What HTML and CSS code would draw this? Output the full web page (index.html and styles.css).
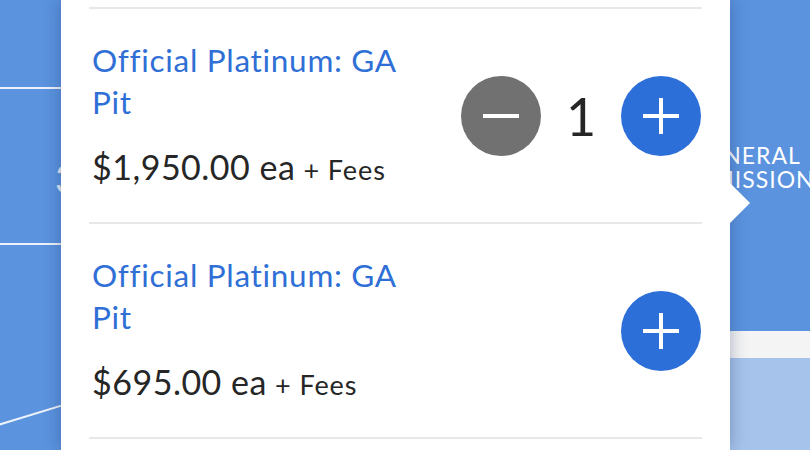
FILE: index.html
```html
<!DOCTYPE html>
<html>
<head>
<meta charset="utf-8">
<link rel="stylesheet" href="styles.css">
</head>
<body>
<div class="map">
  <div class="hline hline-1"></div>
  <div class="hline hline-2"></div>
  <div class="diag"></div>
  <div class="map-num">3</div>
  <div class="section-right">
    <div class="sec-blue"><div class="sec-label"><div>GENERAL</div><div>ADMISSION</div></div></div>
    <div class="sec-gap"></div>
    <div class="sec-light"></div>
  </div>
</div>
<div class="panel">
  <div class="list">
    <div class="ticket">
      <div class="info">
        <div class="title">Official Platinum: GA<br>Pit</div>
        <div class="price"><span class="amount">$1,950.00 ea</span> <span class="fees">+ Fees</span></div>
      </div>
      <div class="qty">
        <button class="btn btn-minus" aria-label="Remove"><svg viewBox="0 0 80 80" width="80" height="80"><rect x="22" y="38" width="36" height="4" fill="#fff"/></svg></button>
        <span class="count">1</span>
        <button class="btn btn-plus" aria-label="Add"><svg viewBox="0 0 80 80" width="80" height="80"><rect x="22" y="38" width="36" height="4" fill="#fff"/><rect x="38" y="22" width="4" height="36" fill="#fff"/></svg></button>
      </div>
    </div>
    <div class="ticket">
      <div class="info">
        <div class="title">Official Platinum: GA<br>Pit</div>
        <div class="price"><span class="amount">$695.00 ea</span> <span class="fees">+ Fees</span></div>
      </div>
      <div class="qty">
        <button class="btn btn-plus" aria-label="Add"><svg viewBox="0 0 80 80" width="80" height="80"><rect x="22" y="38" width="36" height="4" fill="#fff"/><rect x="38" y="22" width="4" height="36" fill="#fff"/></svg></button>
      </div>
    </div>
  </div>
</div>
</body>
</html>
```
FILE: styles.css
```css
html, body {
  margin: 0;
  padding: 0;
  width: 810px;
  height: 450px;
  overflow: hidden;
}
body {
  background: #5b93df;
  font-family: "Lato", "Noto Sans", sans-serif;
  position: relative;
}
.map {
  position: absolute;
  inset: 0;
  overflow: hidden;
}
.hline {
  position: absolute;
  left: 0;
  width: 120px;
  height: 2px;
  background: #eef3fb;
}
.hline-1 { top: 87px; }
.hline-2 { top: 243px; }
.diag {
  position: absolute;
  left: -2px;
  top: 424px;
  width: 80px;
  height: 2px;
  background: #eef3fb;
  transform-origin: 0 50%;
  transform: rotate(-17deg);
}
.map-num {
  position: absolute;
  left: 55px;
  top: 158px;
  font-size: 38px;
  color: #e4ebf6;
  line-height: 40px;
}
.section-right {
  position: absolute;
  left: 600px;
  top: 0;
  width: 210px;
  height: 450px;
  display: flex;
  flex-direction: column;
  overflow: hidden;
}
.sec-blue {
  height: 331px;
  background: #5b93df;
  position: relative;
  overflow: hidden;
}
.sec-label {
  position: absolute;
  left: 46px;
  top: 143px;
  width: 200px;
  text-align: center;
  color: #fff;
  font-size: 23px;
  line-height: 24px;
  letter-spacing: 1px;
}
.sec-gap {
  height: 27px;
  background: #f4f4f4;
}
.sec-light {
  flex: 1;
  background: #a6c4eb;
}
.panel {
  position: absolute;
  left: 61px;
  top: 0;
  width: 669px;
  height: 450px;
  background: #fff;
  box-shadow: 0 0 16px rgba(20, 40, 90, 0.35);
  box-sizing: border-box;
  padding: 7px 28px 0 28px;
}
.panel::after {
  content: "";
  position: absolute;
  right: -20px;
  top: 183px;
  border-top: 20px solid transparent;
  border-bottom: 20px solid transparent;
  border-left: 20px solid #fff;
}
.list {
  border-top: 2px solid #e8e8e8;
}
.ticket {
  display: flex;
  align-items: center;
  justify-content: space-between;
  border-bottom: 2px solid #e8e8e8;
  height: 215px;
  box-sizing: border-box;
  padding: 0 1px 0 3px;
}
.info {
  display: flex;
  flex-direction: column;
  gap: 24px;
  padding-top: 2px;
}
.title {
  color: #2f6fd6;
  font-size: 31.5px;
  line-height: 42px;
  letter-spacing: 0.7px;
}
.price {
  color: #262626;
  line-height: 40px;
}
.amount {
  font-size: 34px;
  letter-spacing: 0.5px;
}
.fees {
  font-size: 27px;
  letter-spacing: 0.9px;
  margin-left: 4px;
}
.qty {
  display: flex;
  align-items: center;
  gap: 25px;
}
.btn {
  width: 80px;
  height: 80px;
  border-radius: 50%;
  border: none;
  padding: 0;
  margin: 0;
  display: block;
}
.btn svg { display: block; }
.btn-minus { background: #717171; }
.btn-plus { background: #2d6fd8; }
.count {
  font-size: 52px;
  color: #262626;
  line-height: 60px;
  width: 30px;
  text-align: center;
}
```
